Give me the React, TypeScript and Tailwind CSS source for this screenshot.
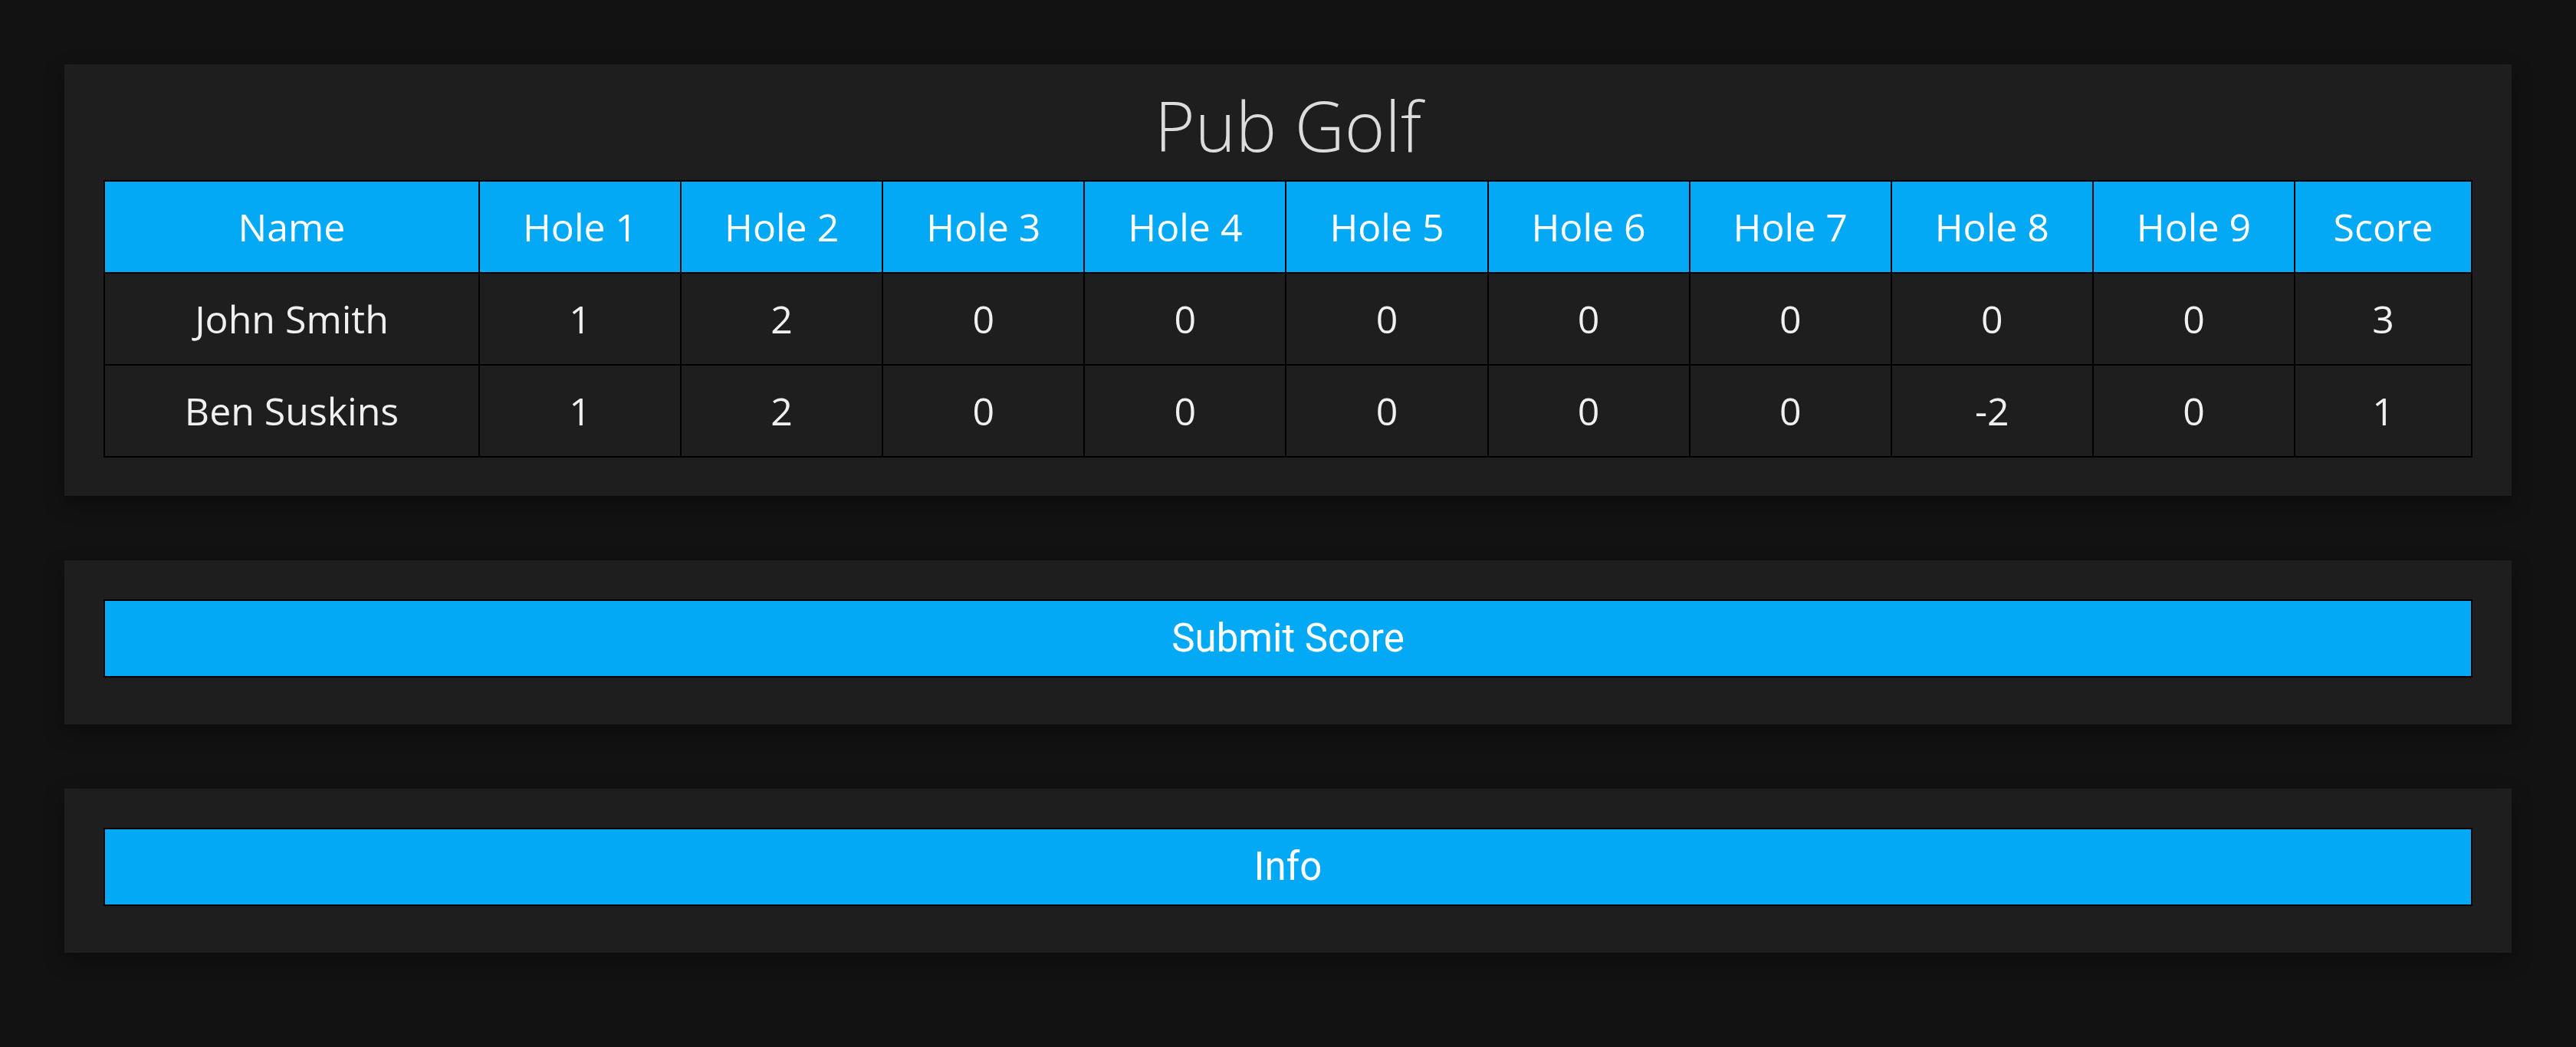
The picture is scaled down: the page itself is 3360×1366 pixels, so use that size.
import React from 'react';

interface Player {
  name: string;
  holes: number[];
}

const players: Player[] = [
  { name: 'John Smith', holes: [1, 2, 0, 0, 0, 0, 0, 0, 0] },
  { name: 'Ben Suskins', holes: [1, 2, 0, 0, 0, 0, 0, -2, 0] },
];

const holeLabels = Array.from({ length: 9 }, (_, i) => `Hole ${i + 1}`);

const Card = ({ children, className = '' }: { children: React.ReactNode; className?: string }) => (
  <div className={`bg-[#1e1e1e] px-[51px] shadow-[0_10px_24px_rgba(0,0,0,0.35)] ${className}`}>{children}</div>
);

const ActionButton = ({ label }: { label: string }) => (
  <button className="block w-full h-[102px] bg-[#03a9f4] border-2 border-black text-white text-[51px] font-['Roboto','Liberation_Sans',sans-serif]">
    {label}
  </button>
);

export default function App() {
  return (
    <div className="min-h-screen bg-[#121212] p-[84px] flex flex-col gap-[84px] font-['Open_Sans',sans-serif]">
      {/* Scoreboard */}
      <Card className="pt-[14px] pb-[50px]">
        <h1 className="text-center text-[90px] font-light leading-[130px] text-[#dcdcdc] mb-[7px]">Pub Golf</h1>
        <table className="w-full table-fixed border-collapse border-2 border-black text-[50px]">
          <thead>
            <tr className="h-[120px] bg-[#03a9f4] text-white">
              <th className="w-[489px] border-2 border-black font-normal">Name</th>
              {holeLabels.map(h => (
                <th key={h} className="border-2 border-black font-normal">{h}</th>
              ))}
              <th className="w-[231px] border-2 border-black font-normal">Score</th>
            </tr>
          </thead>
          <tbody>
            {players.map(p => (
              <tr key={p.name} className="h-[120px] text-[#f0f0f0]">
                <td className="border-2 border-black text-center">{p.name}</td>
                {p.holes.map((s, i) => (
                  <td key={i} className="border-2 border-black text-center">{s}</td>
                ))}
                <td className="border-2 border-black text-center">{p.holes.reduce((a, b) => a + b, 0)}</td>
              </tr>
            ))}
          </tbody>
        </table>
      </Card>

      <Card className="pt-[51px] pb-[61px]">
        <ActionButton label="Submit Score" />
      </Card>

      <Card className="pt-[51px] pb-[61px]">
        <ActionButton label="Info" />
      </Card>
    </div>
  );
}
